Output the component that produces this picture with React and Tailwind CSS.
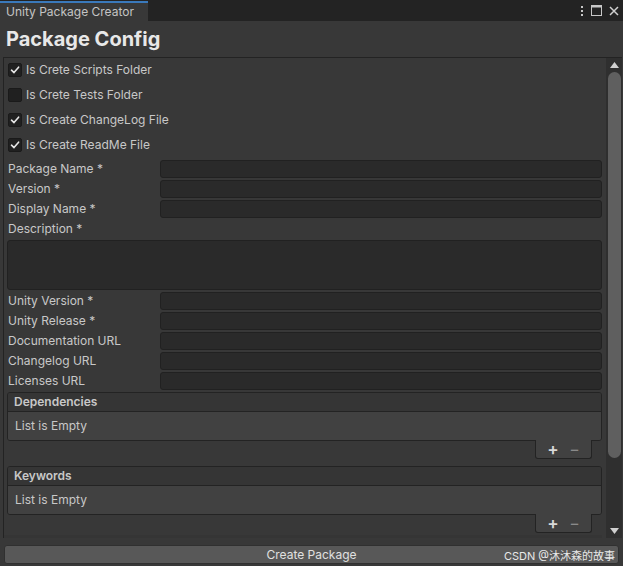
import React from "react";

const font = { fontFamily: "Inter, 'Noto Sans', 'Noto Sans CJK SC', sans-serif" };

function Check({ checked }) {
  return (
    <div className="w-[14px] h-[14px] rounded-[2px] bg-[#202020] border border-[#1a1a1a] flex items-center justify-center">
      {checked && (
        <svg width="10" height="10" viewBox="0 0 10 10">
          <path d="M1.5 5.2 L4 7.6 L8.6 2.2" stroke="#e6e6e6" strokeWidth="1.6" fill="none" strokeLinecap="round" strokeLinejoin="round" />
        </svg>
      )}
    </div>
  );
}

function CheckRow({ label, checked }) {
  return (
    <div className="h-[25px] flex items-center gap-[4px] pl-[4px] pb-[2px]">
      <Check checked={checked} />
      <span className="text-[12px] text-[#c8c8c8]">{label}</span>
    </div>
  );
}

function Field({ label }) {
  return (
    <div className="h-[20px] flex items-center">
      <span className="w-[156px] shrink-0 pl-[4px] text-[12px] text-[#c8c8c8]">{label}</span>
      <div className="flex-1 h-[18px] rounded-[3px] bg-[#2a2a2a] border border-[#212121]" />
    </div>
  );
}

function ListBox({ title }) {
  return (
    <div>
      <div className="ml-[3px] rounded-[3px] border border-[#232323] overflow-hidden">
        <div className="h-[19px] bg-[#353535] border-b border-[#232323] flex items-center pl-[6px] text-[12px] font-semibold text-[#c8c8c8]">
          {title}
        </div>
        <div className="h-[28px] bg-[#414141] flex items-center pl-[7px] text-[12px] text-[#c8c8c8]">List is Empty</div>
      </div>
      <div className="flex justify-end pr-[10px]">
        <div className="w-[57px] h-[19px] -mt-[1px] bg-[#414141] border border-t-0 border-[#232323] rounded-b-[3px] flex items-center justify-around px-[6px]">
          <span className="text-[17px] leading-none font-semibold text-[#d8d8d8]">+</span>
          <span className="text-[16px] leading-none text-[#8a8a8a]">−</span>
        </div>
      </div>
    </div>
  );
}

export default function App() {
  return (
    <div className="w-[623px] h-[566px] bg-[#383838] flex flex-col overflow-hidden" style={font}>
      {/* tab bar */}
      <div className="h-[21px] shrink-0 bg-[#232323] flex items-end justify-between">
        <div className="w-[148px] h-[20px] bg-[#383838] border-t-2 border-[#3a79bb] flex items-center pl-[6px] text-[12px] text-[#c4c4c4]">
          Unity Package Creator
        </div>
        <div className="flex items-center h-[20px] gap-[7px] pr-[4px] pb-[1px]">
          <svg width="4" height="12" viewBox="0 0 4 12">
            <rect x="1" y="1" width="2" height="2" fill="#c8c8c8" />
            <rect x="1" y="5" width="2" height="2" fill="#c8c8c8" />
            <rect x="1" y="9" width="2" height="2" fill="#c8c8c8" />
          </svg>
          <svg width="11" height="11" viewBox="0 0 11 11">
            <rect x="0.5" y="0.5" width="10" height="10" stroke="#c8c8c8" fill="none" />
            <rect x="0.5" y="0.5" width="10" height="2" fill="#c8c8c8" />
          </svg>
          <svg width="10" height="10" viewBox="0 0 10 10">
            <path d="M1 1 L9 9 M9 1 L1 9" stroke="#d0d0d0" strokeWidth="1.5" />
          </svg>
        </div>
      </div>
      {/* title */}
      <div className="h-[36px] shrink-0 flex items-center pl-[6px] pb-[1px] text-[20px] font-bold text-[#e8e8e8]">Package Config</div>
      {/* scroll view */}
      <div className="ml-[3px] mr-[1px] h-[481px] shrink-0 border-t border-l border-[#232323] flex">
        <div className="flex-1 overflow-hidden pr-[4px]">
          <CheckRow label="Is Crete Scripts Folder" checked />
          <CheckRow label="Is Crete Tests Folder" />
          <CheckRow label="Is Create ChangeLog File" checked />
          <CheckRow label="Is Create ReadMe File" checked />
          <div className="h-[1px]" />
          <Field label="Package Name *" />
          <Field label="Version *" />
          <Field label="Display Name *" />
          <div className="h-[20px] flex items-center pl-[4px] text-[12px] text-[#c8c8c8]">Description *</div>
          <div className="ml-[3px] h-[50px] mt-[1px] mb-[1px] rounded-[3px] bg-[#2a2a2a] border border-[#212121]" />
          <Field label="Unity Version *" />
          <Field label="Unity Release *" />
          <Field label="Documentation URL" />
          <Field label="Changelog URL" />
          <Field label="Licenses URL" />
          <div className="h-[1px]" />
          <ListBox title="Dependencies" />
          <div className="h-[7px]" />
          <ListBox title="Keywords" />
          <div className="h-[2px]" />
          <div className="h-[20px] bg-[#353535] flex items-center pl-[6px] text-[12px] font-semibold text-[#c8c8c8]">
            ▸ Authors
          </div>
        </div>
        {/* scrollbar */}
        <div className="w-[16px] bg-[#2f2f2f] flex flex-col items-center">
          <div className="h-[14px] flex items-center justify-center">
            <svg width="9" height="6" viewBox="0 0 9 6"><path d="M0 6 L4.5 0 L9 6 Z" fill="#d0d0d0" /></svg>
          </div>
          <div className="w-[13px] h-[386px] rounded-[7px] bg-[#5f5f5f]" />
          <div className="flex-1" />
          <div className="h-[14px] flex items-center justify-center">
            <svg width="9" height="6" viewBox="0 0 9 6"><path d="M0 0 L4.5 6 L9 0 Z" fill="#d0d0d0" /></svg>
          </div>
        </div>
      </div>
      <div className="h-[7px] shrink-0" />
      <div className="relative shrink-0 mx-[4px] h-[19px] rounded-[3px] bg-[#585858] border border-[#303030] flex items-center justify-center text-[12px] text-[#e0e0e0]">
        Create Package
        <span className="absolute right-[3px] top-[2px] text-[11px] text-[#e8e8e8]">CSDN @沐沐森的故事</span>
      </div>
    </div>
  );
}
